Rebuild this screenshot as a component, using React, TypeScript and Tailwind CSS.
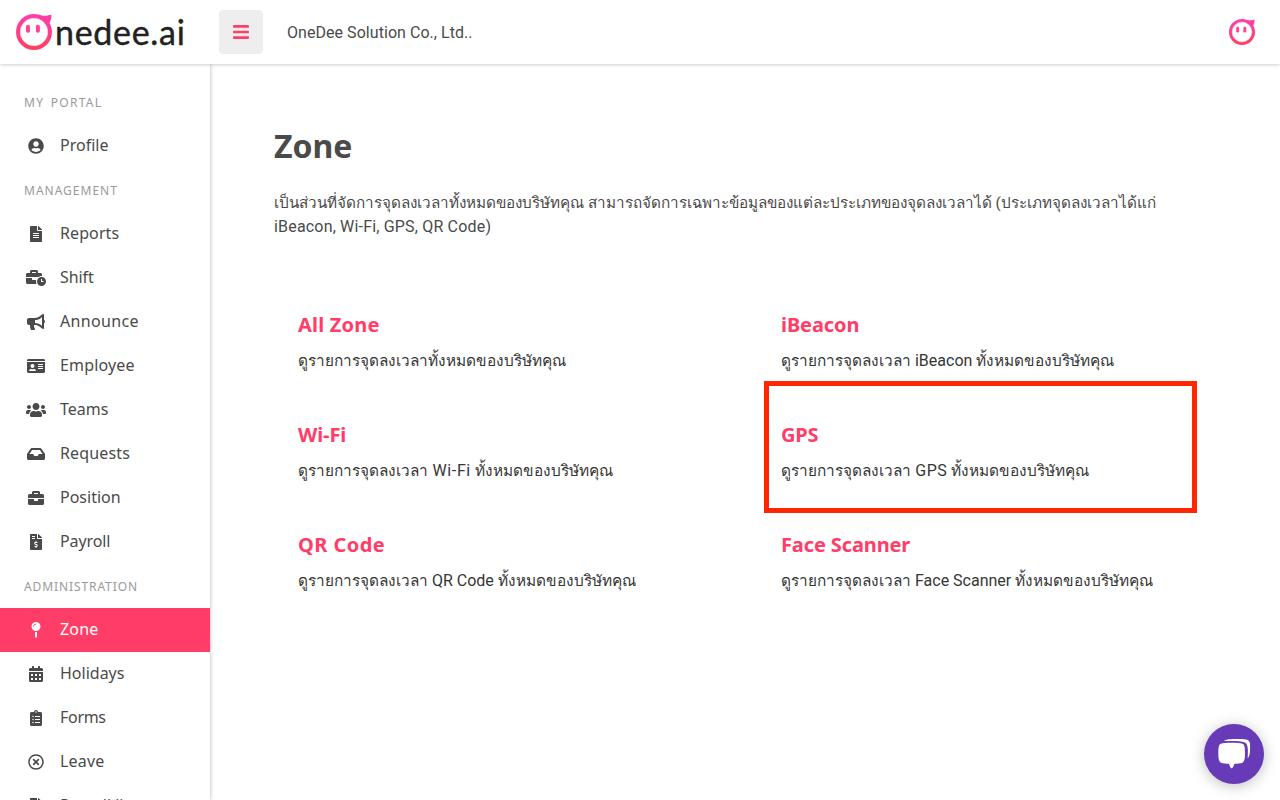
import type { IconType } from "react-icons";
import {
  FaBars,
  FaBriefcase,
  FaBullhorn,
  FaBusinessTime,
  FaCalendarAlt,
  FaClipboardList,
  FaFileAlt,
  FaFileInvoiceDollar,
  FaIdCard,
  FaInbox,
  FaMapPin,
  FaRegTimesCircle,
  FaUserCircle,
  FaUsers,
} from "react-icons/fa";

type NavEntry = { label: string; icon: IconType; tracking?: string; active?: boolean };
type NavSection = { title: string; tracking: string; items: NavEntry[] };

const sections: NavSection[] = [
  {
    title: "MY PORTAL",
    tracking: "tracking-[1.3px] [word-spacing:2px]",
    items: [{ label: "Profile", icon: FaUserCircle }],
  },
  {
    title: "MANAGEMENT",
    tracking: "tracking-[1px]",
    items: [
      { label: "Reports", icon: FaFileAlt, tracking: "tracking-[0.1px]" },
      { label: "Shift", icon: FaBusinessTime, tracking: "tracking-[-0.1px]" },
      { label: "Announce", icon: FaBullhorn, tracking: "tracking-[0.35px]" },
      { label: "Employee", icon: FaIdCard, tracking: "tracking-[0.15px]" },
      { label: "Teams", icon: FaUsers },
      { label: "Requests", icon: FaInbox, tracking: "tracking-[0.15px]" },
      { label: "Position", icon: FaBriefcase },
      { label: "Payroll", icon: FaFileInvoiceDollar, tracking: "tracking-[-0.1px]" },
    ],
  },
  {
    title: "ADMINISTRATION",
    tracking: "tracking-[0.9px]",
    items: [
      { label: "Zone", icon: FaMapPin, tracking: "tracking-[0.2px]", active: true },
      { label: "Holidays", icon: FaCalendarAlt },
      { label: "Forms", icon: FaClipboardList, tracking: "tracking-[-0.3px]" },
      { label: "Leave", icon: FaRegTimesCircle, tracking: "tracking-[0.2px]" },
      { label: "Payroll list", icon: FaFileInvoiceDollar },
    ],
  },
];

const zones = [
  { title: "All Zone", tracking: "tracking-[0.2px]", kind: "", kindTracking: "" },
  { title: "iBeacon", tracking: "tracking-[-0.1px]", kind: "iBeacon", kindTracking: "tracking-normal" },
  { title: "Wi-Fi", tracking: "tracking-[-0.1px]", kind: "Wi-Fi", kindTracking: "tracking-[0.6px]" },
  { title: "GPS", tracking: "tracking-[-0.2px]", kind: "GPS", kindTracking: "tracking-[0.4px]", highlighted: true },
  { title: "QR Code", tracking: "tracking-[0.45px]", kind: "QR Code", kindTracking: "tracking-normal" },
  { title: "Face Scanner", tracking: "tracking-[-0.12px]", kind: "Face Scanner", kindTracking: "tracking-normal" },
];

function Mascot({ id, className }: { id: string; className: string }) {
  return (
    <svg viewBox="0 0 36 36" className={className} aria-hidden="true">
      <defs>
        <linearGradient id={id} x1="0" y1="0" x2="0" y2="1">
          <stop offset="0" stopColor="#ff3caf" />
          <stop offset="1" stopColor="#ff4060" />
        </linearGradient>
      </defs>
      <path
        d="M18 0C21 0 24 .8 26.400 1.800C29 2 32.500 1.600 35.300 .6C35.800 3.500 34.800 6.500 33.500 9C35.200 12 36 15 36 18A18 18 0 1 1 18 0Z"
        fill={`url(#${id})`}
      />
      <circle cx="18" cy="18" r="13.700" fill="#fff" stroke="#e9dfe4" strokeWidth=".7" />
      <rect x="10" y="10.800" width="4" height="8" rx="1.800" fill="#ff4499" />
      <rect x="19.900" y="10.800" width="4" height="8" rx="1.800" fill="#ff4499" />
    </svg>
  );
}

function Header() {
  return (
    <header className="relative z-20 flex h-16 shrink-0 items-center bg-white pl-4 pr-[25px] shadow-[0_0_4px_rgba(0,0,0,0.3)]">
      <div className="flex w-[203px] items-center">
        <Mascot id="brand-mascot" className="size-9 shrink-0" />
        <span className="ml-[3px] font-[Lato] text-[34px] leading-9 tracking-[0.7px] text-[#222] [-webkit-text-stroke:0.4px_#222]">
          nedee.ai
        </span>
      </div>
      <button className="flex size-11 items-center justify-center rounded bg-[#eee] text-[#ff3d67]">
        <FaBars className="size-[18px]" />
      </button>
      <span className="ml-6 pt-0.5 font-['Roboto',sans-serif] text-base tracking-[0.05px] text-[#4a4a4a]">
        OneDee Solution Co., Ltd..
      </span>
      <Mascot id="avatar-mascot" className="ml-auto size-[26px]" />
    </header>
  );
}

function Sidebar() {
  return (
    <nav className="z-10 w-[210px] shrink-0 overflow-hidden bg-white pt-4 shadow-[0_0_4px_rgba(0,0,0,0.3)]">
      {sections.map((section) => (
        <div key={section.title}>
          <div
            className={`flex h-11 items-center whitespace-nowrap pl-6 pt-px text-xs text-[#999] ${section.tracking}`}
          >
            {section.title}
          </div>
          {section.items.map(({ label, icon: Icon, tracking = "tracking-normal", active }) => (
            <a
              key={label}
              className={`flex h-11 items-center gap-3.5 pl-[26px] text-base ${
                active ? "bg-[#ff3d67] text-white" : "text-[#4a4a4a]"
              }`}
            >
              <Icon className="h-4 w-5 shrink-0" />
              <span className={`pb-0.5 ${tracking}`}>{label}</span>
            </a>
          ))}
        </div>
      ))}
    </nav>
  );
}

function ZoneCard({ title, tracking, kind, kindTracking, highlighted }: (typeof zones)[number]) {
  return (
    <div className="relative h-[110px] pl-6 pt-5">
      <h2 className={`text-xl font-bold leading-[30px] text-[#ff3d67] ${tracking}`}>{title}</h2>
      <p className="mt-[9px] whitespace-nowrap font-['Roboto',sans-serif] text-[15.38px] leading-6 text-[#363636]">
        ดูรายการจุดลงเวลา
        {kind && <span className={`text-base ${kindTracking}`}>{` ${kind} `}</span>}
        ทั้งหมดของบริษัทคุณ
      </p>
      {highlighted && (
        <div className="absolute -top-[19px] left-[7px] h-[132px] w-[433px] border-[5px] border-[#ff2600]" />
      )}
    </div>
  );
}

function ChatButton() {
  return (
    <button className="absolute bottom-4 right-4 z-30 size-[60px] rounded-full bg-[#673ab7] shadow-[0_2px_14px_rgba(0,0,0,0.25)]">
      <svg viewBox="0 0 180 180" className="size-[60px]" fill="#fff" aria-hidden="true">
        <path d="M60 51C64 46 78 45 104 45C129 45 137 47 138 60C139 78 138 99 131 103C132 84 133 68 127 59C119 50 98 51 60 51Z" />
        <path d="M83 56C98 56 109 57 115 59C121 61 123 68 123 87C123 105 121 113 115 116C110 118 98 119 92 119C89 122 87 133 83 133C79 133 77 122 74 119C68 119 56 118 51 116C45 113 43 105 43 87C43 68 45 61 51 59C57 57 68 56 83 56Z" />
      </svg>
    </button>
  );
}

export default function App() {
  return (
    <div className="relative flex h-screen flex-col overflow-hidden bg-white font-['Noto_Sans',sans-serif]">
      <Header />
      <div className="flex min-h-0 flex-1">
        <Sidebar />
        <main className="flex-1 pl-16 pr-10 pt-[58px]">
          <h1 className="text-[32px] font-bold leading-[48px] text-[#4a4a4a]">Zone</h1>
          <p className="mt-[21px] whitespace-nowrap font-['Roboto',sans-serif] text-base leading-6 text-[#4a4a4a]">
            <span className="text-[15.26px]">
              เป็นส่วนที่จัดการจุดลงเวลาทั้งหมดของบริษัทคุณ
              สามารถจัดการเฉพาะข้อมูลของแต่ละประเภทของจุดลงเวลาได้ (ประเภทจุดลงเวลาได้แก่
            </span>
            <br />
            <span className="tracking-[0.18px]">iBeacon, Wi-Fi, GPS, QR Code)</span>
          </p>
          <div className="mt-[51px] grid grid-cols-2">
            {zones.map((zone) => (
              <ZoneCard key={zone.title} {...zone} />
            ))}
          </div>
        </main>
      </div>
      <ChatButton />
    </div>
  );
}
